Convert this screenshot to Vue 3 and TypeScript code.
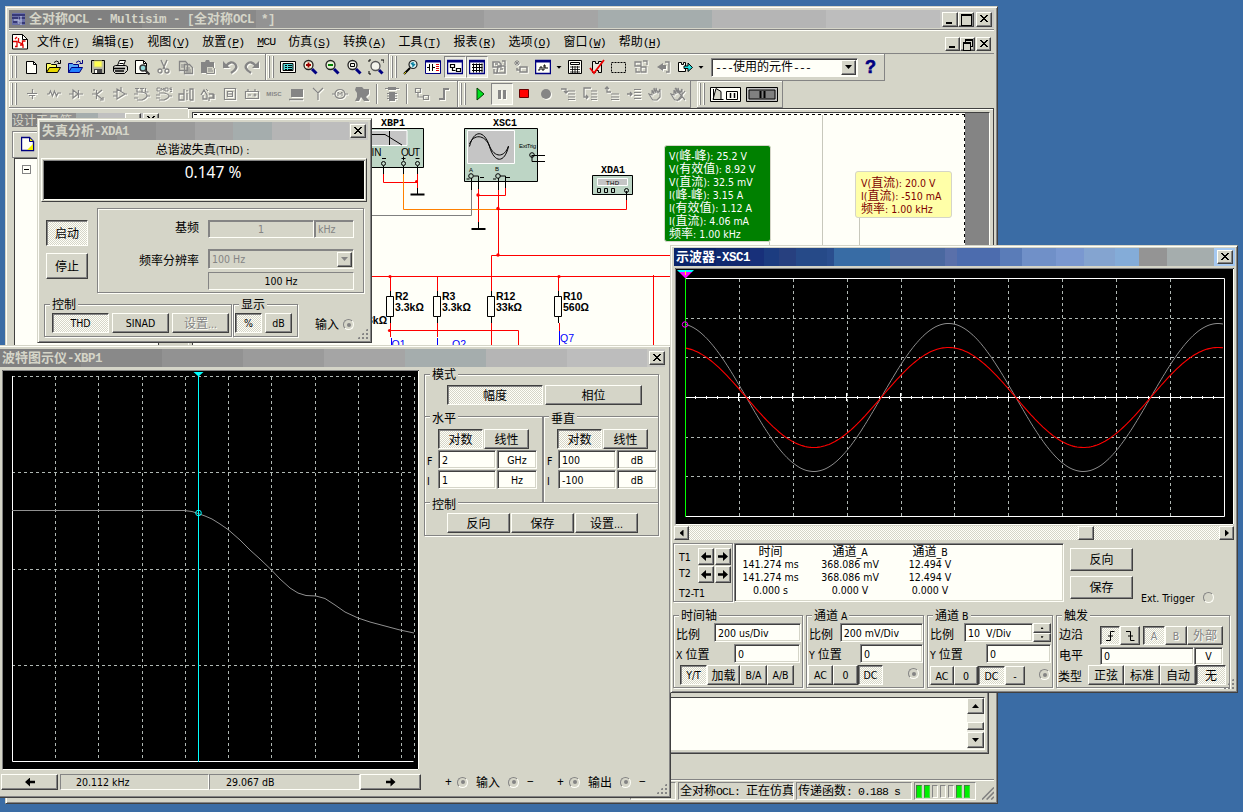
<script setup lang="ts">
import { h } from 'vue'

type Shape = [d: string, fill?: string, stroke?: string, width?: number]

const K = '#000', G = '#858585', W = '#fffff8', N = '#000080', Y = '#ffff60', R = '#e00000', C = '#20e0e0'

const icons: Record<string, Shape[]> = {
  new: [['M2.5 2.5h7l3 3v9h-10z', W, K], ['M9.5 2.5v3h3', 'none', K]],
  open: [['M.5 13.5v-9h4l1 1h5v3', Y, K], ['M.5 13.5l3-5h11l-3 5z', '#e8d800', K], ['M8 3.5q3-3 5 0M14.5 1v3.5h-3', 'none', K]],
  openb: [['M.5 13.5v-9h4l1 1h5v3', '#58a8f8', N], ['M.5 13.5l3-5h11l-3 5z', '#2080ff', N], ['M8 3.5q3-3 5 0M14.5 1v3.5h-3', 'none', N]],
  save: [['M1.5 1.5h13v13h-12l-1-1z', '#b8b8a8', K], ['M4 2h8v6h-8z', '#ffff50', '#d0d080'], ['M4 10h8v4h-8z', '#444'], ['M5 11h2v3h-2z', W]],
  print: [['M5.5 6.5l2-5h6l-2 5z', W, K], ['M1.5 7.5l2-1h10l2 1v4l-3 3h-9l-2-2z', '#d0d0c8', K], ['M2 9.5h11M3 12h9', 'none', K, 1.3], ['M7.5 4.5h4', 'none', K]],
  preview: [['M1.5 1.5h8l3 3v10h-11z', W, K], ['M9.5 1.5v3h3', 'none', K], ['M12 9a3 3 0 1 1-6 0a3 3 0 1 1 6 0', '#8fd8d8', '#333', 1.4], ['M11.5 11.5l4 4', 'none', '#333', 2]],
  cut: [['M5 1l4 9M11 1l-4 9', 'none', G, 1.4], ['M6 12a2 2 0 1 1-4 0a2 2 0 1 1 4 0M13 12a2 2 0 1 1-4 0a2 2 0 1 1 4 0', 'none', G, 1.3]],
  copy: [['M1.5 2.5h6l2 2v7h-8zM6.5 5.5h5l3 3v6h-8z', '#d5d5c8', G, 1.3], ['M3 6h3M3 8h3M8 9h4M8 11h5M8 13h5', 'none', G]],
  paste: [['M1 3h4l1-2h3l1 2h4v11h-13z', G], ['M6.5 7.5h6l2 2v5h-8z', '#d5d5c8', G], ['M8 10h4M8 12h5', 'none', G]],
  undo: [['M4 7q5-6 9-2t-4 9', 'none', G, 2.4], ['M1 2v7h7z', G]],
  redo: [['M12 7q-5-6-9-2t4 9', 'none', G, 2.4], ['M15 2v7h-7z', G]],
  list: [['M.5 2.5h15v11h-15z', W, K], ['M3 4.5h10v7h-10z', '#50d8d8', K], ['M5 6.5h2M8 6.5h4M5 8.5h2M8 8.5h4M5 10.5h2M8 10.5h4', 'none', K]],
  zin: [['M11 6a4.5 4.5 0 1 1-9 0a4.5 4.5 0 1 1 9 0', '#f4f0d8', '#222', 1.3], ['M4 6h5M6.5 3.5v5', 'none', '#a00000', 1.8], ['M10 10l4.5 4.5', 'none', N, 3]],
  zout: [['M11 6a4.5 4.5 0 1 1-9 0a4.5 4.5 0 1 1 9 0', '#e8f0d8', '#222', 1.3], ['M4 6h5', 'none', '#008000', 2], ['M10 10l4.5 4.5', 'none', N, 3]],
  zarea: [['M11 6a4.5 4.5 0 1 1-9 0a4.5 4.5 0 1 1 9 0', '#f4f4ec', '#222', 1.3], ['M4.5 4.5h4v3h-4z', 'none', K], ['M10 10l4.5 4.5', 'none', N, 3]],
  zfit: [['M12 7a4.5 4.5 0 1 1-9 0a4.5 4.5 0 1 1 9 0', '#f4f4ec', '#555', 1.3], ['M1 3v-2h2M13 1h3v3M1 12v3h2', 'none', K], ['M11 11l3.5 3.5', 'none', N, 3]],
  find: [['M14 5.5a4 4 0 1 1-8 0a4 4 0 1 1 8 0', '#dff4f4', '#222', 1.2], ['M8 4l3 3M10 3v4l2-2', 'none', '#0880a0', 1.4], ['M7 9l-6 6', 'none', K, 2], ['M1 15l2-2', 'none', '#d0c000', 1]],
  cap: [['M.5 1.5h15v13h-15z', W, N], ['M1 2.5h14', 'none', N, 2], ['M2 8.5h2M4.5 5v7M7.5 5v7M8 8.5h2', 'none', K], ['M11 5.5h3M11 7.5h3M11 9.5h3M11 11.5h3', 'none', R]],
  hier: [['M.5 1.5h15v13h-15z', W, N, 1.5], ['M1 2.5h14', 'none', N, 2], ['M3.5 5.5h4v3h-4zM9.5 9.5h4v3h-4zM5.5 9v2.5h3', 'none', K, 1.2]],
  grid: [['M.5 1.5h15v13h-15z', W, N, 1.5], ['M1 2.5h14', 'none', N, 2], ['M3 5.5h10.5M3 8.5h10.5M3 11.5h10.5M4.5 4.5v9M7.5 4.5v9M10.5 4.5v9M13 4.5v9', 'none', K]],
  db: [['M2 3h6l2 2v3h-8zM7 7h7v7h-8z', 'none', G, 1.6], ['M11 2h3v4M3 10v4h3M4 5h3M9 10h3', 'none', G, 1.4]],
  star: [['M4 1v6M1 4h6M2 2l4 4M6 2l-4 4', 'none', G, 1], ['M7 8h7v5h-7zM4 9v2h3', 'none', G, 1.5]],
  graph: [['M.5 1.5h15v13h-15z', W, N, 1.5], ['M1 2.5h14', 'none', N, 2], ['M3 11h2v-3h2v3h2v-5h1v3h3', 'none', K]],
  calc: [['M1.5 1.5h13v13h-13z', W, K], ['M3.5 3.5h9v2h-9z', W, K], ['M3 8h10M3 10.5h10M3 13h10M5.5 7v7M8 7v7M10.5 7v7', 'none', K, .8]],
  check: [['M3.5 2.5h3v2h3v-2h3v11h-3v-2h-3v2h-3z', '#e8e8dc', K], ['M1 9l4 5l10-13', 'none', '#f00000', 1.8]],
  area: [['M.5 3.5h14v10h-14z', 'none', K]],
  xfer: [['M2 3h6v4h-6zM8 8h5v5h-5zM10 2h4v4M3 9v4h4', 'none', G, 1.3]],
  back: [['M8 4l-6 4l6 4v-2h3v-4h-3z', G], ['M10 3h4v10h-3', 'none', G, 1.4]],
  fwd: [['M1.5 3.5h3v2h2v-2h2v9h-7z', W, K], ['M7 7h4v-3l4.5 4.5l-4.5 4v-3h-4z', C, K]],
  src: [['M8.5 3v4M3 7.5h10M5 9.5h6M8.5 10v3', 'none', G, 1.2]],
  res: [['M1 8h2l1.5-3l2 5l2-5l2 5l1.5-3h3', 'none', G, 1.2]],
  diode: [['M1 8h4M11 8h4M10.5 4v8M5 4v8l5-4z', 'none', G, 1.2]],
  trans: [['M2 8h4M6.5 4v9M7 8l5-4M7 9l5 4M4 3v2M13 11v3h-3', 'none', G, 1.2]],
  amp: [['M5 3v10l8-5zM1 6h4M1 10h4M13 8h2M9 1v4', 'none', G, 1.2]],
  ttl: [['M1 2.5h4M3 2.5v4M6 2.5h4M8 2.5v4M11.5 2v4h3', 'none', G, 1.2], ['M3 6h5q5 1 5 3.5t-5 4.5h-5M0 8h4M0 12h4M13 10h3', 'none', G, 1.2]],
  cmos: [['M4 2h-3v3h3M5 5v-3l1.5 2l1.5-2v3M9 2h3v3h-3zM16 2h-2v1.5h2v2h-2', 'none', G, 1], ['M3 7h5q5 1 5 3t-5 4h-5M0 9h4M0 12h4M13 10h3', 'none', G, 1.2]],
  dig: [['M1 8h5v6h-5zM6 3v11M9 7v7M9 4v1.5M12 14v-11h3v11h-3', 'none', G, 1.3]],
  mix: [['M1 9l3-5l3 5v4h-4v-4M9 8h4v4h-4v3M14 8v5', 'none', G, 1.3], ['M6 3l2 2', 'none', G]],
  ind: [['M2.5 2.5h11v11h-11z', 'none', G, 1.2], ['M5.5 5.5h5v5h-5zM5 8h5', 'none', G, 1.2]],
  pow: [['M1.5 5.5h13v7h-13zM4 5v-2M11 5v-2M4 9h3M9.5 9h3M11 7.5v3', 'none', G, 1.2]],
  per: [['M3 3h12v8h-12z', G], ['M1 13.5h14', 'none', G, 1.5]],
  rf: [['M8 14v-7M3 2l5 5l5-5', 'none', G, 1.2]],
  mot: [['M13 8a5 4.5 0 1 1-10 0a5 4.5 0 1 1 10 0M0 8h3M13 8h3', 'none', G, 1.2], ['M6 10v-4l2 2.5l2-2.5v4', 'none', G, 1]],
  ni: [['M2 1h6l2 2h5v5l-3 3l3 3v1h-5l-3-4l-2 4h-4l2-4v-4l-2-3z', G]],
  mcu: [['M1 2.5h14', 'none', G], ['M4 1h8v3h-8z', G], ['M5 6h6v9h-6z', G], ['M3 7.5h10M3 10h10M3 12.5h10', 'none', G, 1]],
  hb: [['M1.5 2.5h5v4h-5zM9.5 9.5h5v4h-5zM4 7v4h5', 'none', G, 1.2]],
  bus: [['M3 13h5v-10h5', 'none', G, 2]],
  play: [['M5 2v12l7-6z', '#00e020', '#004000']],
  pause: [['M4 4h3v9h-3zM9 4h3v9h-3z', G]],
  stop: [['M3.5 3.5h9v8h-9z', '#f00', '#600']],
  rec: [['M13 8a5 5 0 1 1-10 0a5 5 0 1 1 10 0', G]],
  into: [['M1 3h5v3M4 5l2 2l2-2', 'none', G, 1.3], ['M8 5h7M8 8h7M8 11h7M8 13.5h7', 'none', G]],
  over: [['M9 2h-7v9h3M4 9l2 2l-2 2', 'none', G, 1.3], ['M9 5h6M9 8h6M9 11h6M9 13.5h6', 'none', G]],
  out: [['M3 1v5h4M1 3l2-2l2 2', 'none', G, 1.3], ['M7 8h8M7 11h8M7 13.5h8', 'none', G]],
  run: [['M1 8h5M4 6l2 2l-2 2', 'none', G, 1.3], ['M8 3.5h7M8 6.5h7M8 9.5h7M8 12.5h7', 'none', G]],
  hand: [['M4 13l-3-5l3 1v-5l2 4v-6l2 5v-5l2 5l2-4v8l-3 3h-4z', 'none', G, 1.1]],
  handx: [['M4 13l-3-5l3 1v-5l2 4v-6l2 5v-5l2 5l2-4v8l-3 3h-4zM5 2l10 12M15 5l-8 10', 'none', G, 1.2]],
  doc: [['M.5 .5h10l5 5v9.500h-15z', W, K], ['M3 5l2-2M1 7.500h4v5h-2M6.500 4v4l4 2v-3h3M8 11h3v3', 'none', R, 1.3], ['M10.500 .5v5h5', 'none', K]],
  app: [['M1 2h13v12h-13z', '#6a70a8'], ['M1 4h13M1 7h6M8 7h6M2 11h4M8 12h6', 'none', '#272768', 1.6], ['M3 9h5v4M10 5v9', 'none', '#c8d0e8', 1]],
  arrow: [['M5.5 7h5l-2.5 2.7z', K]],
}

const dim = new Set(['cut', 'copy', 'paste', 'undo', 'redo', 'db', 'star', 'xfer', 'back', 'rec', 'pause', 'into', 'over', 'out', 'run', 'hand', 'handx',
  'src', 'res', 'diode', 'trans', 'amp', 'ttl', 'cmos', 'dig', 'mix', 'ind', 'pow', 'per', 'rf', 'mot', 'ni', 'mcu', 'hb', 'bus'])

const Icon = (p: { n: string }) =>
  h('svg', { class: ['ico', { dim: dim.has(p.n) }], viewBox: '0 0 16 16', width: 16, height: 16 },
    (icons[p.n] ?? []).map(([d, fill, stroke, width]) =>
      h('path', { d, fill: fill ?? 'none', stroke: stroke ?? 'none', 'stroke-width': width ?? 1, 'stroke-dasharray': p.n === 'area' ? '2 1' : undefined })))
Icon.props = ['n']

/* Sets Chinese runs and Latin runs in their own sizes; & marks the mnemonic letter. */
const Tx = (p: { t: string }) =>
  h('span', { class: 'tx' }, p.t.split(/([\u3000-\u9fff]+)/).filter(Boolean).map((run) => {
    if (/[\u3000-\u9fff]/.test(run)) return h('span', { class: 'cj' }, run)
    const i = run.indexOf('&')
    return i < 0
      ? h('span', { class: 'la' }, run)
      : h('span', { class: 'la' }, [run.slice(0, i), h('u', run[i + 1]), run.slice(i + 2)])
  }))
Tx.props = ['t']

const menus = ['文件(&F)', '编辑(&E)', '视图(&V)', '放置(&P)', '&MCU', '仿真(&S)', '转换(&A)', '工具(&T)', '报表(&R)', '选项(&O)', '窗口(&W)', '帮助(&H)']
const fileTools = ['new', 'open', 'openb', 'save', 'print', 'preview', 'cut', 'copy', 'paste', 'undo', 'redo']
const zoomTools = ['list', 'zin', 'zout', 'zarea', 'zfit']
const viewTools = ['find', 'cap', 'hier', 'grid', 'db', 'star', 'graph']
const moreTools = ['calc', 'check', 'area', 'xfer', 'back', 'fwd']
const partTools = ['src', 'res', 'diode', 'trans', 'amp', 'ttl', 'cmos', 'dig', 'mix', 'ind', 'pow', 'misc', 'per', 'rf', 'mot', 'ni']
const simTools = ['play', 'pause', 'stop', 'rec', 'into', 'over', 'out', 'run', 'hand', 'handx']

const probe = ['V(峰-峰): 25.2 V', 'V(有效值): 8.92 V', 'V(直流): 32.5 mV', 'I(峰-峰): 3.15 A', 'I(有效值): 1.12 A', 'I(直流): 4.06 mA', '频率: 1.00 kHz']
const supply = ['V(直流): 20.0 V', 'I(直流): -510 mA', '频率: 1.00 kHz']

const wave = (amp: number) => {
  const pts: string[] = []
  for (let x = 685; x <= 1224; x += 2) pts.push(`${x},${(397.5 - amp * Math.cos((2 * Math.PI * (x - 679)) / 269.5)).toFixed(1)}`)
  return pts.join(' ')
}
const scopeX = [739, 793, 847, 901, 954, 1008, 1062, 1116, 1170]
const scopeY = [318, 357, 437, 476]
const ticks = Array.from({ length: 50 }, (_, i) => Math.floor(685 + i * 10.78) + 0.5)
const bodeX = [55, 98, 142, 185, 228, 271, 315, 358, 401, 414]
const bodeY = [376, 472, 569, 665]
const axes = [['水平', '2', 'GHz', '1', 'Hz'], ['垂直', '100', 'dB', '-100', 'dB']]
const resistors = [
  { x: 390.5, name: 'R2', val: '3.3kΩ' }, { x: 437.5, name: 'R3', val: '3.3kΩ' },
  { x: 491.5, name: 'R12', val: '33kΩ' }, { x: 558.5, name: 'R10', val: '560Ω' },
]
const lamps = [true, true, false, false, false, true, true]
const cols = [
  ['时间', '141.274 ms', '141.274 ms', '0.000 s'],
  ['通道_A', '368.086 mV', '368.086 mV', '0.000 V'],
  ['通道_B', '12.494 V', '12.494 V', '0.000 V'],
]
</script>

<template>
  <div class="desk">
    <!-- application window -->
    <section class="win main">
      <header class="bar bar-main"><Icon n="app" /><Tx class="title" t="全对称OCL - Multisim - [全对称OCL *]" />
        <div class="caps"><i class="cap min"></i><i class="cap max"></i><i class="cap x sp"></i></div>
      </header>
      <nav class="menu"><Icon n="doc" />
        <Tx v-for="m in menus" :key="m" class="song" :t="m" />
        <div class="caps mdi"><i class="cap min"></i><i class="cap rest"></i><i class="cap x"></i></div>
      </nav>
      <div class="tools">
        <div class="band b1"><i class="grip"></i><b v-for="n in fileTools" :key="n" class="tb"><Icon :n="n" /></b></div>
        <div class="band b2"><i class="grip"></i><b v-for="n in zoomTools" :key="n" class="tb"><Icon :n="n" /></b></div>
        <div class="band b3"><i class="grip"></i>
          <b v-for="n in viewTools" :key="n" class="tb" :class="{ on: n === 'hier' || n === 'grid' }"><Icon :n="n" /></b>
          <b class="drop"><Icon n="arrow" /></b>
          <b v-for="n in moreTools" :key="n" class="tb"><Icon :n="n" /></b>
          <b class="drop"><Icon n="arrow" /></b>
          <div class="combo used"><Tx class="song" t="---使用的元件---" /><i class="btn dd"></i></div>
          <b class="help">?</b>
        </div>
      </div>
      <div class="tools">
        <div class="band p1"><i class="grip"></i>
          <b v-for="n in partTools" :key="n" class="tb"><span v-if="n === 'misc'" class="misc">MISC</span><Icon v-else :n="n" /></b>
          <i class="sep"></i><b class="tb"><Icon n="mcu" /></b><i class="sep"></i>
          <b class="tb"><Icon n="hb" /></b><b class="tb"><Icon n="bus" /></b>
        </div>
        <div class="band p2"><i class="grip"></i><b v-for="n in simTools" :key="n" class="tb" :class="{ on: n === 'pause' }"><Icon :n="n" /></b></div>
        <div class="band p3"><i class="grip"></i>
          <svg class="switch" width="32" height="17" viewBox="0 0 32 17"><path d="M.5 1.5h30v14h-30z" fill="#fffff8" stroke="#000" /><path d="M3 13.5l3-11l5 3v8z" fill="#d5d5c8" stroke="#000" /><path d="M3.5 3v10.5h10M16.5 5.5h11v8h-11z" fill="none" stroke="#000" /><path d="M20.5 7v5M24.5 7v5" stroke="#000" stroke-width="1.5" /></svg>
          <svg class="switch" width="33" height="17" viewBox="0 0 33 17"><path d="M.5 1.5h31v14h-31z" fill="#c0c0c0" stroke="#000" /><path d="M3 4h26v9h-26z" fill="#808080" stroke="#000" /><path d="M14.5 5v7M18.5 5v7" stroke="#000" stroke-width="2" /></svg>
        </div>
      </div>
      <div class="work">
        <aside class="side">
          <div class="side-bar"><Tx class="song pale" t="设计工具箱" /><i class="cap min"></i><i class="cap x"></i></div>
          <div class="side-tools"><svg width="14" height="16" viewBox="0 0 14 16"><path d="M.5 1.5h8l4 4v9h-12z" fill="#fffff8" stroke="#000080" stroke-width="1.4" /><path d="M12 8v6h-6z" fill="#f0f000" /><path d="M8.5 2v3.5h4" fill="#f0f000" stroke="#000080" /></svg></div>
          <div class="tree"><i class="node"></i></div>
        </aside>
        <div class="doc"><div class="sheet">
          <svg class="wires" width="775" height="236" viewBox="193 113 775 236">
            <path d="M194 114.5h771M964.5 114v240" class="edge" />
            <path d="M822.5 115v240M859.5 217v140M769.5 242v20" stroke="#c8c8bc" fill="none" />
            <g class="red"><path d="M383.5 174v8.5h34M417.5 174v14M478.5 188v34M505.5 188v7.5h-27M498.5 190v66M498 209.5h128.5v-10M491.5 296v-40.5h180M371 276.5h300M653.5 275v80M390 330.5h128.5v20M390.5 276v16M437.5 276v16M558.5 276v16M390.5 323v14M437.5 323v14M491.5 323v30M559.5 323v8" /></g>
            <path d="M403.5 174v35.5h95" stroke="#ff8000" fill="none" />
            <path d="M371 215.5h100.5v-26" stroke="#808080" fill="none" />
            <path d="M391.5 338v10M437.5 338v10M559.5 331v18" stroke="#00f" />
            <g fill="#f00"><circle cx="416.5" cy="181.5" r="1.5" /><circle cx="478" cy="195" r="1.7" /><circle cx="498" cy="208.5" r="1.7" /><circle cx="498" cy="255" r="1.7" /><circle cx="390" cy="276.5" r="1.6" /><circle cx="559" cy="276.5" r="1.6" /><circle cx="389.5" cy="330.5" r="1.6" /></g>
            <g class="box"><path d="M350 128.5h73.5v39h-73.5zM464.5 128.5h73v53h-73zM592.5 175.5h40v19h-40z" /></g>
            <path d="M350 130.5h57v15h-57zM467.5 130.5h47v33h-47zM597.5 178.5h30v7h-30z" fill="#c5c5c5" stroke="#fff" />
            <g class="blk">
              <path d="M371 134.5h14l17 10.5M389.5 131v14M383.5 166v8M403.5 166v8M417.5 166v8M417.5 188v6M478.5 176h-5M478.5 176v13M498.5 178v12M500 176h5.500v12M471.5 178v12M478.5 222v6M532 155.5h13M532 155v6.5h13M626.5 191v9" />
              <path d="M410.5 194.5h14M471.5 229h14" stroke-width="2" />
              <path d="M469.5 146.500c4-17 15-17 20 0s15 17 19 0M469.5 144c4-10 15-10 20 2s15 12 19 0" />
              <circle cx="383.5" cy="163.5" r="2" /><circle cx="403.5" cy="163.5" r="2" /><circle cx="417.5" cy="163.5" r="2" />
              <circle cx="471" cy="176" r="2.3" /><circle cx="498" cy="176" r="2.3" /><circle cx="532" cy="155" r="2.3" /><circle cx="626.5" cy="190.5" r="2" />
              <path d="M597.5 188.5h3v4h-3zM604.5 188.5h3v4h-3zM611.5 188.5h3v4h-3zM382 158.5h4M401.5 158.5h4M403.5 156.5v4M415.5 158.5h4M466.5 179h3M480 177.5h4M493 179h3M506 177.5h4" />
            </g>
            <g class="names"><text x="381" y="126">XBP1</text><text x="493" y="126">XSC1</text><text x="601" y="173">XDA1</text></g>
            <g class="ar"><text x="371.5" y="156">IN</text><text x="401" y="156" textLength="19">OUT</text></g>
            <g class="tiny"><text x="519" y="148" textLength="17">ExtTrig</text><text x="469" y="172">A</text><text x="495" y="171">B</text><text x="606" y="184.5" textLength="13">THD</text></g>
            <g v-for="r in resistors" :key="r.name">
              <path :d="`M${r.x} 291v5M${r.x} 317v6M${r.x - 4} 296.5h7v20h-7z`" fill="#fffff8" stroke="#000" />
              <text class="rb" :x="r.x + 4.5" y="300">{{ r.name }}</text><text class="rb" :x="r.x + 4.5" y="311">{{ r.val }}</text>
            </g>
            <text class="rb" x="367" y="324">3kΩ</text>
            <g class="q"><text x="391.500" y="348">Q1</text><text x="452" y="348">Q2</text><text x="560" y="342">Q7</text></g>
          </svg>
          <div class="probe green"><Tx v-for="l in probe" :key="l" class="ui" :t="l" /></div>
          <div class="probe yellow"><Tx v-for="l in supply" :key="l" class="ui" :t="l" /></div>
        </div></div>
      </div>
      <div class="output"><div class="list"><div class="vscroll"><i class="btn up"></i><i class="btn thumb"></i><i class="btn down"></i></div></div></div>
      <footer class="status">
        <span class="cell s0"></span><span class="cell s1"><Tx class="song" t="全对称OCL: 正在仿真" /></span><span class="cell s1"><Tx class="song" t="传递函数: 0.188 s" /></span>
        <span class="cell s2"><i v-for="(l, i) in lamps" :key="i" class="lamp" :class="{ lit: l }"></i></span>
        <svg width="13" height="13" viewBox="0 0 13 13"><path d="M0 13L13 0M5 13l8-8M10 13l3-3" stroke="#808080" stroke-width="1.7" /></svg>
      </footer>
    </section>

    <!-- distortion analyzer -->
    <section class="win xda">
      <header class="bar bar-xda"><Tx class="title" t="失真分析-XDA1" /><i class="cap x"></i></header>
      <div class="xda-head"><Tx class="ui" t="总谐波失真(THD) :" /></div>
      <div class="lcd"><span>0.147 %</span></div>
      <div class="xda-mid">
        <div class="xda-run"><span class="btn press"><Tx class="ui" t="启动" /></span><span class="btn"><Tx class="ui" t="停止" /></span></div>
        <div class="frame xda-set">
          <div class="line l1"><Tx class="ui lab" t="基频" /><span class="flat mid off"><Tx class="ui" t="1" /></span><span class="flat off unit"><Tx class="ui" t="kHz" /></span></div>
          <div class="line l2"><Tx class="ui lab" t="频率分辨率" /><span class="flat off unit"><Tx class="ui" t="100 Hz" /><i class="btn dd"></i></span></div>
          <div class="line l3"><i></i><span class="thin mid"><Tx class="ui" t="100 Hz" /></span></div>
        </div>
      </div>
      <div class="xda-bot">
        <div class="frame g1"><Tx class="ui legend" t="控制" /><div class="btns"><span class="btn press"><Tx class="ui" t="THD" /></span><span class="btn"><Tx class="ui" t="SINAD" /></span><span class="btn off"><Tx class="ui" t="设置..." /></span></div></div>
        <div class="frame g2"><Tx class="ui legend" t="显示" /><div class="btns"><span class="btn press"><Tx class="ui" t="%" /></span><span class="btn"><Tx class="ui" t="dB" /></span></div></div>
        <Tx class="ui in" t="输入" /><i class="radio dot"></i>
      </div>
      <i class="size"></i>
    </section>

    <!-- bode plotter -->
    <section class="win bode">
      <header class="bar bar-bode"><Tx class="title" t="波特图示仪-XBP1" /><i class="cap x"></i></header>
      <div class="bode-body">
        <div class="bode-left">
          <svg class="plot" width="417" height="400" viewBox="2 370 417 400">
            <path d="M2 370h417v400h-417z" /><path d="M2.5 770v-399.5h416" fill="none" stroke="#808080" /><path d="M418.5 371v398.5h-416" fill="none" stroke="#fffff8" />
            <g class="dash"><path v-for="x in bodeX" :key="x" :d="`M${x + 0.5} 377v384`" /><path v-for="y in bodeY" :key="y" :d="`M12 ${y + 0.5}h402`" /></g>
            <path d="M12.5 376v385.5h401" fill="none" stroke="#fff" />
            <path d="M12 510.5h172l8 1l6 2l7 2.5l7 3l8 5l8 5.5l12 10.5l10 10l10 9l11 10.5l9 9.5l10 9l8 5l8 2.5l10 .5l9 2.5l10 6.500l10 7l13 6l12 4l15 4l15 4l14 3" fill="none" stroke="#909090" />
            <path d="M198.5 372v390" stroke="#0ff" /><path d="M193.5 372h10l-5 4.5z" fill="#0ff" /><circle cx="198.5" cy="513" r="2.8" fill="none" stroke="#0ff" />
          </svg>
          <div class="readout"><span class="btn"><i class="arr l"></i></span><span class="thin"><Tx class="ui" t="20.112 kHz" /></span><span class="thin"><Tx class="ui" t="29.067 dB" /></span><span class="btn"><i class="arr"></i></span></div>
        </div>
        <div class="bode-right">
          <div class="frame modes">
            <Tx class="ui legend" t="模式" />
            <div class="pair"><span class="btn press"><Tx class="ui" t="幅度" /></span><span class="btn"><Tx class="ui" t="相位" /></span></div>
            <div class="axes">
              <div v-for="a in axes" :key="a[0]" class="axis">
                <Tx class="ui legend" :t="a[0]" />
                <div class="sw"><span class="btn press"><Tx class="ui" t="对数" /></span><span class="btn"><Tx class="ui" t="线性" /></span></div>
                <div class="fi"><Tx class="ui" t="F" /><span class="edit"><Tx class="ui" :t="a[1]" /></span><span class="edit mid"><Tx class="ui" :t="a[2]" /></span></div>
                <div class="fi"><Tx class="ui" t="I" /><span class="edit"><Tx class="ui" :t="a[3]" /></span><span class="edit mid"><Tx class="ui" :t="a[4]" /></span></div>
              </div>
            </div>
            <div class="ctl"><Tx class="ui legend" t="控制" />
              <div class="trio"><span class="btn"><Tx class="ui" t="反向" /></span><span class="btn"><Tx class="ui" t="保存" /></span><span class="btn"><Tx class="ui" t="设置..." /></span></div></div>
          </div>
          <div class="io"><b>+</b><i class="radio dot"></i><Tx class="ui" t="输入" /><i class="radio dot"></i><b>−</b><b class="gap">+</b><i class="radio dot"></i><Tx class="ui" t="输出" /><i class="radio dot"></i><b>−</b></div>
        </div>
      </div>
      <i class="size"></i>
    </section>

    <!-- oscilloscope -->
    <section class="win scope">
      <header class="bar bar-scope"><Tx class="title" t="示波器-XSC1" /><i class="cap x"></i></header>
      <svg class="splot" width="559" height="257" viewBox="675 268 559 257">
        <path d="M675 268h559v257h-559z" /><path d="M675.5 525v-256.5h558" fill="none" stroke="#808080" /><path d="M1233.5 269v255.5h-558" fill="none" stroke="#fffff8" />
        <g class="dash"><path v-for="x in scopeX" :key="x" :d="`M${x + 0.5} 279v238`" /><path v-for="y in scopeY" :key="y" :d="`M685 ${y + 0.5}h539`" /></g>
        <path d="M685 278.5h539.5v238h-539.5" fill="none" stroke="#fff" />
        <path d="M685 397.5h539" stroke="#fff" /><path v-for="(t, i) in ticks" :key="i" :d="`M${t} ${i % 5 ? 396 : 393}v${i % 5 ? 3 : 8}`" stroke="#fff" />
        <polyline :points="wave(74)" fill="none" stroke="#8c8c8c" /><polyline :points="wave(50)" fill="none" stroke="#f00" stroke-width="1.1" />
        <path d="M685.5 278v239" stroke="#0f0" />
        <path d="M677 270h17l-2 2h-13z" fill="#0ff" /><path d="M679 272h13l-6.5 6.5z" fill="#f0f" /><path d="M685.5 271v4" stroke="#ff0" /><circle cx="685" cy="324.5" r="2.7" fill="none" stroke="#f0f" />
      </svg>
      <div class="hscroll"><i class="btn le"></i><i class="btn th"></i><i class="btn ri"></i></div>
      <div class="srow">
        <div class="frame tpan">
          <div class="trow"><Tx class="ui" t="T1" /><span class="btn"><i class="arr l"></i></span><span class="btn"><i class="arr"></i></span></div>
          <div class="trow"><Tx class="ui" t="T2" /><span class="btn"><i class="arr l"></i></span><span class="btn"><i class="arr"></i></span></div>
          <Tx class="ui t21" t="T2-T1" />
        </div>
        <div class="vals"><div v-for="c in cols" :key="c[0]" class="vcol"><Tx v-for="(v, i) in c" :key="i" class="ui" :t="v" /></div></div>
        <div class="sbtn"><span class="btn"><Tx class="ui" t="反向" /></span><span class="btn"><Tx class="ui" t="保存" /></span></div>
        <div class="ext"><Tx class="ui" t="Ext. Trigger" /><i class="radio"></i></div>
      </div>
      <div class="sgroups">
        <div class="frame gt"><Tx class="ui legend" t="时间轴" />
          <div class="r1"><Tx class="ui" t="比例" /><span class="edit"><Tx class="ui" t="200 us/Div" /></span></div>
          <div class="r2"><Tx class="ui" t="X 位置" /><span class="edit"><Tx class="ui" t="0" /></span></div>
          <div class="r3"><span class="btn press"><Tx class="ui" t="Y/T" /></span><span class="btn"><Tx class="ui" t="加载" /></span><span class="btn"><Tx class="ui" t="B/A" /></span><span class="btn"><Tx class="ui" t="A/B" /></span></div>
        </div>
        <div class="frame ga"><Tx class="ui legend" t="通道 A" />
          <div class="r1"><Tx class="ui" t="比例" /><span class="edit"><Tx class="ui" t="200 mV/Div" /></span></div>
          <div class="r2"><Tx class="ui" t="Y 位置" /><span class="edit"><Tx class="ui" t="0" /></span></div>
          <div class="r3"><span class="btn"><Tx class="ui" t="AC" /></span><span class="btn"><Tx class="ui" t="0" /></span><span class="btn press"><Tx class="ui" t="DC" /></span><i class="radio dot"></i></div>
        </div>
        <div class="frame gb"><Tx class="ui legend" t="通道 B" />
          <div class="r1"><Tx class="ui" t="比例" /><span class="edit"><Tx class="ui" t="10  V/Div" /></span><span class="spin"><i class="btn up"></i><i class="btn down"></i></span></div>
          <div class="r2"><Tx class="ui" t="Y 位置" /><span class="edit"><Tx class="ui" t="0" /></span></div>
          <div class="r3"><span class="btn"><Tx class="ui" t="AC" /></span><span class="btn"><Tx class="ui" t="0" /></span><span class="btn press"><Tx class="ui" t="DC" /></span><span class="btn"><Tx class="ui" t="-" /></span><i class="radio dot"></i></div>
        </div>
        <div class="frame gx"><Tx class="ui legend" t="触发" />
          <div class="r1"><Tx class="ui" t="边沿" />
            <span class="btn press"><svg width="11" height="12"><path d="M1 10.5h4.5v-9h4M3 6h5" fill="none" stroke="#000" /></svg></span>
            <span class="btn"><svg width="11" height="12"><path d="M1 1.5h4.5v9h4M3 6h5" fill="none" stroke="#000" /></svg></span>
            <span class="btn press off"><Tx class="ui" t="A" /></span><span class="btn off"><Tx class="ui" t="B" /></span><span class="btn off"><Tx class="ui" t="外部" /></span></div>
          <div class="r2"><Tx class="ui" t="电平" /><span class="edit"><Tx class="ui" t="0" /></span><span class="edit mid"><Tx class="ui" t="V" /></span></div>
          <div class="r3"><Tx class="ui" t="类型" /><span class="btn"><Tx class="ui" t="正弦" /></span><span class="btn"><Tx class="ui" t="标准" /></span><span class="btn"><Tx class="ui" t="自动" /></span><span class="btn press"><Tx class="ui" t="无" /></span></div>
        </div>
      </div>
      <i class="size"></i>
    </section>
  </div>
</template>

<style>
body { margin: 0; overflow: hidden; }
.tx { white-space: pre; font-size: 12px; line-height: 14px; display: inline-block; }
.tx .cj { font-family: "Noto Sans CJK SC", sans-serif; font-size: 12px; }
.tx.ui .la { font-family: "DejaVu Sans Condensed", "Noto Sans", sans-serif; font-size: 10.5px; }
.tx.song .la { font-family: "Liberation Mono", monospace; font-size: 11.5px; letter-spacing: -.9px; }
.tx.title .cj { font-size: 13px; font-weight: 700; }
.tx.title .la { font-family: "Liberation Mono", monospace; font-size: 12.5px; letter-spacing: -.5px; font-weight: 700; }
.tx u { text-underline-offset: 1px; }
.ico { display: block; flex: none; }
.ico.dim { filter: drop-shadow(1px 1px 0 #fffff8); }
</style>

<style scoped>
.desk { position: relative; width: 1243px; height: 812px; overflow: hidden; background: #3a6ca5; color: #000; --f: #d5d5c8; --w: #fffff8; --d: #404040; --g: #848484; font-family: "Noto Sans", sans-serif; font-size: 12px; }
.desk * { box-sizing: border-box; }
.desk i { display: block; font-style: normal; }
.win { position: absolute; background: var(--f); border: 1px solid; border-color: var(--f) var(--d) var(--d) var(--f); box-shadow: inset 1px 1px var(--w), inset -1px -1px var(--g); }
.bar { display: flex; align-items: center; height: 18px; color: var(--f); }
.bar .cap { margin-left: auto; }
.cap, .btn { background: var(--f); border: 1px solid; border-color: var(--w) var(--d) var(--d) var(--w); box-shadow: inset -1px -1px var(--g); }
.cap { flex: none; width: 16px; height: 14px; position: relative; }
.cap.x::before { content: ""; position: absolute; left: 3px; top: 2px; width: 8px; height: 7px; background: linear-gradient(41deg, transparent 43%, #000 43% 57%, transparent 57%), linear-gradient(-41deg, transparent 43%, #000 43% 57%, transparent 57%); }
.cap.min::before { content: ""; position: absolute; left: 3px; bottom: 2px; width: 6px; height: 2px; background: #000; }
.cap.max::before { content: ""; position: absolute; left: 2px; top: 1px; width: 9px; height: 9px; border: 1px solid #000; border-top-width: 2px; }
.cap.rest::before { content: ""; position: absolute; left: 4px; top: 1px; width: 6px; height: 5px; border: 1px solid #000; border-top-width: 2px; }
.cap.rest::after { content: ""; position: absolute; left: 2px; top: 4px; width: 6px; height: 6px; border: 1px solid #000; border-top-width: 2px; background: var(--f); }
.caps { display: flex; margin-left: auto; }
.caps .cap { margin: 0; }
.caps .sp { margin-left: 2px; }
.desk .btn { display: flex; align-items: center; justify-content: center; }
.press { border-color: var(--d) var(--w) var(--w) var(--d); box-shadow: inset 1px 1px var(--g); background: conic-gradient(#fffff8 25%, #d5d5c8 0 50%, #fffff8 0 75%, #d5d5c8 0) 0 0 / 2px 2px; }
.off { color: var(--g); text-shadow: 1px 1px #fffff8; }
.edit, .flat, .thin { display: flex; align-items: center; border: 1px solid; border-color: var(--g) var(--w) var(--w) var(--g); padding-left: 3px; }
.edit { background: var(--w); box-shadow: inset 1px 1px var(--d), inset -1px -1px var(--f); }
.flat { box-shadow: inset 1px 1px var(--g), inset -1px -1px var(--f); }
.mid { justify-content: center; padding: 0; }
.frame { border: 1px solid var(--g); box-shadow: 1px 1px var(--w), inset 1px 1px var(--w); }
.frame > .legend, .axis > .legend, .ctl > .legend { display: block; background: var(--f); padding: 0 2px; width: fit-content; margin: -8px 0 0 5px; position: relative; }
.radio { width: 11px; height: 11px; border-radius: 50%; border: 1px solid; border-color: var(--g) var(--w) var(--w) var(--g); flex: none; position: relative; }
.radio.dot::before { content: ""; position: absolute; inset: 2.5px; border-radius: 50%; background: var(--g); }
.size { position: absolute; right: 3px; bottom: 3px; width: 11px; height: 11px; background: radial-gradient(circle at 2px 2px, #848484 1px, transparent 1.3px) 0 0 / 4px 4px; clip-path: polygon(100% 0, 100% 100%, 0 100%); }
.arr { width: 10px; height: 9px; background: #000; clip-path: polygon(0 35%, 50% 35%, 50% 0, 100% 50%, 50% 100%, 50% 65%, 0 65%); }
.arr.l { transform: scaleX(-1); }
.dd::after, .down::after, .up::after, .le::after, .ri::after { content: ""; width: 7px; height: 4px; background: #000; clip-path: polygon(0 0, 100% 0, 50% 100%); }
.up::after { transform: scaleY(-1); }
.le::after, .ri::after { width: 4px; height: 7px; clip-path: polygon(0 50%, 100% 0, 100% 100%); }
.ri::after { transform: scaleX(-1); }
.dash path { stroke: #b0b8b4; fill: none; stroke-dasharray: 3 3; }

/* application window */
.main { left: 5px; top: 6px; width: 993px; height: 798px; padding: 3px; display: flex; flex-direction: column; }
.bar-main { flex: none; margin-bottom: 1px; padding: 0 2px; background: linear-gradient(90deg, #808080 133px, #898989 0 247px, #939393 0 361px, #9c9c9c 0 475px, #a5a5a5 0 589px, #a5adad 0 703px, #b5b5b5 0 817px, #bdbdbd 0 931px, #c8c8c4 0); }
.bar-main .title { margin-left: 2px; }
.bar-main .caps .cap { height: 15px; }
.bar-main .caps { margin-right: 0; }
.menu { flex: none; height: 25px; display: flex; align-items: center; gap: 13px; border-top: 1px solid var(--g); border-bottom: 1px solid var(--g); box-shadow: inset 0 1px var(--w); padding: 0 3px; }
.menu > .song:first-of-type { margin-left: -4px; }
.mdi { padding-top: 4px; margin-right: 0; }
.mdi .cap { width: 15px; height: 14px; }
.mdi .x { margin-left: 1px; }
.tools { flex: none; height: 27px; display: flex; }
.band { display: flex; align-items: center; border-right: 1px solid var(--g); border-bottom: 1px solid var(--g); box-shadow: inset 1px 1px var(--w); padding-left: 2px; }
.grip { width: 7px; height: 22px; margin-right: 2px; background: linear-gradient(90deg, #fffff8 1px, #848484 0 2px, transparent 0 4px, #fffff8 0 5px, #848484 0 6px, transparent 0); flex: none; }
.b1 .grip, .p1 .grip { margin-right: 3px; }
.tb { width: 22px; height: 22px; display: flex; align-items: center; justify-content: center; flex: none; }
.tb.on { background: #ecece2; border: 1px solid; border-color: var(--g) var(--w) var(--w) var(--g); }
.drop { width: 10px; overflow: hidden; display: flex; justify-content: center; }
.b1 { width: 257px; }
.b2 { width: 123px; }
.b3 { width: 496px; }
.combo { display: flex; align-items: center; background: var(--w); border: 1px solid; border-color: var(--g) var(--w) var(--w) var(--g); box-shadow: inset 1px 1px var(--d); }
.used { width: 147px; height: 19px; padding: 0 1px 0 3px; margin-left: 5px; }
.used .dd, .unit .dd { width: 15px; height: 15px; margin-left: auto; }
.help { font: 700 18px "Liberation Sans", sans-serif; color: #000080; margin-left: 7px; -webkit-text-stroke: .6px #000080; }
.misc { font: 700 6px "Liberation Sans", sans-serif; color: var(--g); letter-spacing: .1px; }
.sep { width: 2px; height: 20px; border-left: 1px solid var(--g); border-right: 1px solid var(--w); margin: 0 3px; flex: none; }
.p1 { width: 449px; }
.p2 { width: 233px; }
.p3 { width: 86px; margin-left: 6px; }
.p3 .grip { margin-right: 4px; }
.p3 .switch { margin-right: 4px; flex: none; }
.work { flex: 1; display: flex; min-height: 0; }
.side { width: 179px; padding: 4px 29px 0 3px; display: flex; flex-direction: column; border-top: 1px solid var(--w); }
.side-bar { height: 14px; display: flex; gap: 2px; color: var(--f); background: linear-gradient(90deg, #808080 30px, #909090 0 64px, #a5adad 0 86px, #c0c0c0 0); }
.side-bar .cap { height: 13px; }
.side-bar .song { margin-right: auto; }
.side-tools { height: 27px; margin-top: 4px; border: 1px solid var(--g); padding: 4px 8px; box-shadow: inset 1px 1px var(--w); }
.tree { flex: 1; background: var(--w); border: 1px solid var(--d); padding: 6px 7px; margin: 0 0 0 2px; }
.node { width: 9px; height: 9px; border: 1px solid var(--g); background: linear-gradient(#000, #000) center / 5px 1px no-repeat; }
.doc { flex: 1; border-top: 1px solid var(--d); border-right: 1px solid var(--d); padding: 3px 3px 0 4px; box-shadow: inset 1px 1px var(--w); }
.sheet { position: relative; height: 100%; overflow: hidden; border: 1px solid; border-color: var(--d) var(--w) var(--w) var(--d); background: linear-gradient(90deg, var(--w) 772px, #848484 0); }
.wires { position: absolute; left: 0; top: 0; }
.edge { stroke: #000; stroke-dasharray: 3 3; fill: none; }
.red { stroke: #f00; fill: none; }
.box { fill: #bdd5c5; stroke: #000; }
.blk { stroke: #000; fill: none; }
.names { font: 700 10px "Liberation Mono", monospace; }
.ar { font: 10px "Liberation Sans", sans-serif; }
.tiny { font: 6px "Liberation Sans", sans-serif; }
.rb { font: 700 10.5px "Liberation Sans", sans-serif; }
.q { font: 10.5px "Liberation Sans", sans-serif; fill: #00f; }
.probe { position: absolute; display: flex; flex-direction: column; border: 1px solid #d5d5c8; border-radius: 3px; }
.probe .tx { line-height: 13px; height: 13px; }
.green { left: 471px; top: 32px; width: 107px; height: 97px; background: #008000; color: #fff; padding: 2px 4px; }
.yellow { left: 662px; top: 58px; width: 97px; height: 47px; background: #ffffa8; color: #800000; padding: 3px 5px; }
.output { flex: none; height: 62px; margin-bottom: 25px; margin-right: 5px; padding: 4px 3px 3px; border: 1px solid; border-color: var(--w) var(--d) var(--d) var(--w); box-shadow: inset -1px -1px var(--g); }
.list { height: 100%; background: var(--w); border: 1px solid; border-color: var(--d) var(--w) var(--w) var(--d); display: flex; justify-content: flex-end; }
.vscroll { width: 17px; display: flex; flex-direction: column; background: #eaeae0; }
.vscroll .btn { height: 16px; }
.vscroll .thumb { height: 8px; margin: 8px 0 2px; }
.status { flex: none; height: 21px; display: flex; align-items: flex-end; border-top: 1px solid var(--g); box-shadow: inset 0 1px var(--w); padding-left: 621px; gap: 2px; }
.cell { height: 18px; border: 1px solid; border-color: var(--g) var(--w) var(--w) var(--g); display: flex; align-items: center; overflow: hidden; flex: none; }
.s0 { width: 46px; }
.s1 { width: 116px; padding-left: 1px; }
.s2 { width: 62px; gap: 2px; padding-left: 1px; margin-right: 4px; }
.lamp { width: 6px; height: 13px; border: 1px solid; border-color: var(--g) var(--w) var(--w) var(--g); }
.lamp.lit { background: #00f000; border-color: #408040 #40e040 #40e040 #408040; }

/* distortion analyzer */
.xda { left: 37px; top: 118px; width: 335px; height: 225px; padding: 3px 2px 2px; }
.bar-xda { width: 328px; padding: 0 2px; background: linear-gradient(90deg, #808080 38px, #888 0 77px, #919191 0 116px, #9a9a9a 0 155px, #a5a5a5 0 193px, #a5adad 0 232px, #b5b5b5 0 270px, #bdbdbd 0 309px, #c8c8c4 0); }
.xda-head { height: 18px; text-align: center; padding-top: 1px; }
.xda-head .tx { margin-left: -4px; }
.lcd { width: 326px; height: 44px; margin-left: 1px; background: #000; border: 1px solid; border-color: var(--w) var(--d) var(--d) var(--w); box-shadow: inset 0 0 0 1px var(--f), inset 2px 2px var(--g), inset -2px -2px var(--w); color: #fff; font: 15.5px "Noto Sans", sans-serif; text-align: center; padding: 2px 0 0 18px; }
.xda-mid { display: flex; margin-top: 6px; }
.xda-run { display: flex; flex-direction: column; gap: 7px; padding: 12px 9px 0 6px; }
.xda-run .btn { width: 42px; height: 26px; }
.xda-set { width: 267px; height: 85px; display: flex; flex-direction: column; padding-top: 11px; }
.line { display: grid; grid-template-columns: 101px 146px; column-gap: 9px; }
.lab { text-align: right; }
.l1 { grid-template-columns: 110px 106px 40px; column-gap: 0; height: 18px; }
.l1 .lab { padding-right: 9px; }
.l2 { margin-top: 11px; height: 20px; }
.l2 .lab { padding-top: 4px; }
.l3 { margin-top: 3px; height: 18px; }
.flat.off { text-shadow: none; }
.flat .dd { margin-right: 1px; }
.flat .dd::after { background: #848484; }
.xda-bot { display: flex; margin-top: 11px; padding-left: 4px; }
.g1, .g2 { height: 33px; }
.g1 { width: 188px; }
.g2 { width: 65px; margin-left: 1px; }
.btns { display: flex; gap: 3px; padding-left: 7px; margin-top: 1px; position: relative; }
.g2 .btns { padding-left: 1px; }
.btns .btn { height: 20px; width: 57px; }
.g2 .btns .btn { width: 27px; }
.in { margin: 13px 4px 0 17px; }
.xda-bot .radio { margin-top: 15px; }

/* bode plotter */
.bode { left: -4px; top: 345px; width: 675px; height: 453px; padding: 3px; }
.bar-bode { width: 665px; padding: 0 0 0 2px; background: linear-gradient(90deg, #808080 81px, #898989 0 162px, #929292 0 243px, #9b9b9b 0 324px, #a5a5a5 0 405px, #a5adad 0 486px, #b5b5b5 0 567px, #bdbdbd 0 647px, #c8c8c4 0); }
.bode-body { display: flex; padding-top: 3px; }
.bode-left { width: 421px; padding-left: 2px; }
.plot, .splot { display: block; }
.readout { display: grid; grid-template-columns: 57px 151px 151px 61px; margin: 4px 0 0 -1px; height: 16px; }
.readout .thin:nth-child(2) { margin-left: 2px; padding-left: 15px; }
.readout .thin { padding-left: 16px; }
.bode-right { padding: 4px 0 0 3px; }
.modes { width: 235px; height: 162px; }
.pair { display: grid; grid-template-columns: 96px 97px; gap: 2px; height: 20px; margin: 3px 0 0 22px; }
.axes { display: grid; grid-template-columns: 118px 115px; margin-top: 11px; }
.axis { border-top: 1px solid var(--g); box-shadow: inset 0 1px var(--w); height: 86px; }
.axis + .axis { border-left: 1px solid var(--g); box-shadow: inset 1px 1px var(--w), -1px 0 var(--g); }
.axis > .legend { margin-top: -6px; }
.sw { display: grid; grid-template-columns: 45px 45px; gap: 1px; height: 20px; margin: 3px 0 0 13px; }
.fi { display: grid; grid-template-columns: 10px 58px 40px; column-gap: 1px; height: 19px; margin: 1px 0 1px 2px; }
.axis + .axis .fi { margin-left: 3px; }
.fi > .ui { padding-top: 4px; }
.fi + .fi { margin-top: 0; }
.ctl { border-top: 1px solid var(--g); box-shadow: inset 0 1px var(--w); }
.ctl > .legend { margin-top: -6px; }
.trio { display: grid; grid-template-columns: repeat(3, 63px); gap: 1px; height: 20px; margin: 1px 0 0 22px; }
.io { display: flex; align-items: center; margin: 240px 0 0 21px; height: 12px; }
.io b { font: 12px/12px "Noto Sans", sans-serif; width: 8px; }
.io .radio { margin: 0 8px 0 4px; }
.io .tx + .radio { margin-left: 8px; }
.io .gap { margin-left: 22px; }

/* oscilloscope */
.scope { left: 670px; top: 245px; width: 568px; height: 448px; padding: 2px; }
.bar-scope { width: 561px; margin-left: 1px; color: #fff; padding: 0 2px; background: linear-gradient(90deg, #0a246a 42px, #10296f 0 76px, #18307a 0 90px, #1c3c80 0 105px, #27407f 0 122px, #264a88 0 153px, #2a4e8e 0 160px, #386ca5 0 216px, #4a68a0 0 271px, #5a70aa 0 283px, #4c6cae 0 326px, #5a7cb8 0 348px, #7090c8 0 382px, #7a98d0 0 410px, #84a4d0 0 441px, #84acd8 0 465px, #949494 0 493px, #a5adad 0 540px, #a5c8f0 0); }
.splot { margin: 2px 0 0 2px; }
.hscroll { height: 14px; width: 560px; margin: 1px 0 0 1px; display: flex; background: conic-gradient(#fffff8 25%, #d5d5c8 0 50%, #fffff8 0 75%, #d5d5c8 0) 0 0 / 2px 2px; }
.hscroll .btn { width: 15px; }
.hscroll .th { margin-left: 389px; width: 16px; }
.hscroll .ri { margin-left: auto; }
.srow { display: flex; margin-top: 3px; height: 59px; }
.tpan { width: 60px; padding: 4px 0 0 5px; }
.trow { display: grid; grid-template-columns: 18px 16px 16px; gap: 1px; height: 17px; margin-bottom: 1px; }
.trow .ui { padding-top: 2px; }
.trow + .trow .ui { padding-top: 0; }
.t21 { margin-top: -2px; }
.vals { width: 330px; display: flex; background: var(--w); border: 1px solid; border-color: var(--g) var(--w) var(--w) var(--g); box-shadow: inset 1px 1px var(--d), inset -1px -1px var(--f); margin-left: 1px; }
.vcol { display: flex; flex-direction: column; align-items: center; width: 78px; }
.vcol:first-child { width: 71px; }
.vcol:nth-child(2) { margin-left: 3px; width: 82px; }
.vcol .tx { line-height: 13px; height: 13px; }
.sbtn { display: flex; flex-direction: column; gap: 5px; padding: 5px 0 0 6px; }
.sbtn .btn { width: 63px; height: 23px; }
.ext { display: flex; align-items: center; align-self: flex-end; gap: 8px; margin: 0 0 -1px 8px; height: 11px; flex: none; }
.sgroups { display: flex; margin-top: 13px; gap: 3px; }
.sgroups .frame { height: 73px; }
.gt { width: 130px; }
.ga { width: 118px; }
.gb { width: 126px; }
.gx { width: 174px; }
.sgroups .r1 { display: flex; height: 19px; padding-left: 2px; }
.sgroups .r2 { display: flex; height: 19px; padding-left: 2px; margin-top: 2px; }
.sgroups .r3 { display: flex; height: 20px; margin-top: 2px; padding-left: 1px; }
.r1 > .ui, .r2 > .ui, .r3 > .ui { padding-top: 3px; }
.r1 > .ui:first-child { padding-top: 4px; width: 38px; }
.gt .r1 .edit { width: 87px; }
.gt .r2 > .ui { width: 58px; }
.gt .r2 .edit { width: 66px; }
.gt .r3 { padding-left: 6px; }
.gt .r3 .btn { width: 27px; }
.gt .r3 .btn:nth-child(2) { width: 33px; }
.ga .r1 > .ui:first-child { width: 31px; }
.ga .r1 .edit { width: 84px; }
.ga .r2 > .ui { width: 51px; }
.ga .r2 .edit { width: 63px; }
.sgroups .r3 .btn { flex: none; }
.ga .r3 .btn { width: 25px; }
.ga .r3 .radio { margin: 3px 0 0 25px; }
.gb .r1 > .ui:first-child { width: 34px; }
.gb .r1 .edit { width: 69px; }
.spin { width: 18px; display: flex; flex-direction: column; }
.spin .btn { flex: 1; }
.spin .btn::after { width: 3px; height: 2px; }
.gb .r2 > .ui { width: 56px; }
.gb .r2 .edit { width: 65px; }
.gb .r3 .btn { width: 24px; }
.gb .r3 { padding-left: 2px; margin-top: 3px; height: 19px; }
.gb .r3 .press { width: 27px; }
.gb .r3 .btn:nth-child(4) { width: 20px; }
.gb .r3 .radio { margin: 3px 0 0 14px; }
.gx .r1 { margin-top: 3px; }
.gx .r1 > .ui:first-child { width: 41px; padding-top: 1px; }
.gx .r1 .btn { width: 20px; }
.gx .r1 .btn:nth-child(4) { width: 22px; margin-left: 3px; }
.gx .r1 .btn:nth-child(5) { width: 22px; }
.gx .r1 .btn:nth-child(6) { width: 36px; }
.gx .r2 { height: 18px; }
.gx .r2 > .ui { width: 41px; padding-top: 1px; }
.gx .r2 .edit { width: 94px; }
.gx .r2 .mid { width: 29px; }
.gx .r3 { margin-top: 0; }
.gx .r3 > .ui { width: 30px; padding-top: 4px; }
.gx .r3 .btn { width: 36px; }
.gx .r3 .press { width: 30px; }
</style>
